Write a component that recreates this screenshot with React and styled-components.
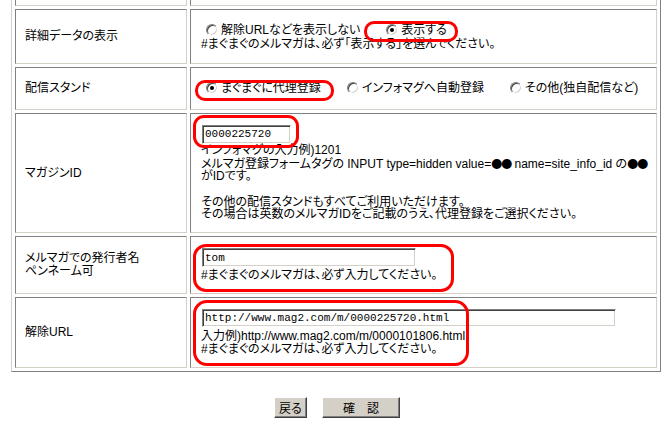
import React from "react";
import styled, { createGlobalStyle, css } from "styled-components";

const GlobalStyle = createGlobalStyle`
  html, body { margin: 0; padding: 0; background: #fff; }
  body {
    font-family: "Liberation Sans", "Noto Sans CJK JP", sans-serif;
    font-size: 12px;
    color: #000;
    font-feature-settings: "palt";
    overflow: hidden;
  }
`;

const Page = styled.div`
  width: 672px;
  height: 428px;
  overflow: hidden;
`;

const FormTable = styled.div`
  display: grid;
  grid-template-columns: 172px 467px;
  grid-template-rows: 20px 55px 43px 120px 58px 71px;
  gap: 3px;
  padding: 3px;
  width: 650px;
  box-sizing: border-box;
  margin: -18px 0 0 11px;
  border: 1px solid;
  border-color: #d4d0c8 #808080 #808080 #d4d0c8;
`;

const Cell = styled.div`
  box-sizing: border-box;
  border: 1px solid;
  border-color: #808080 #d4d0c8 #d4d0c8 #808080;
  display: flex;
  flex-direction: column;
  justify-content: center;
  line-height: 12.7px;
  white-space: nowrap;
`;

const LabelCell = styled(Cell)`
  padding: 0 9px;
`;

const ValueCell = styled(Cell)`
  padding: 0 10px;
  position: relative;
  align-items: flex-start;
`;

const Options = styled.div`
  display: flex;
  align-items: center;
  gap: 21px;
  height: ${(p) => p.$h || 14}px;
`;

const Option = styled.label`
  display: flex;
  align-items: center;
`;

const Radio = styled.span`
  width: 12px;
  height: 12px;
  box-sizing: border-box;
  border-radius: 50%;
  border: 1px solid;
  border-color: #808080 #fff #fff #808080;
  box-shadow: inset 1px 1px 0 #404040, inset -1px -1px 0 #d4d0c8;
  background: #fff;
  margin: 0 3px 0 5px;
  position: relative;
  flex: none;
  ${(p) =>
    p.$checked &&
    css`
      &::after {
        content: "";
        position: absolute;
        left: 3px;
        top: 3px;
        width: 4px;
        height: 4px;
        border-radius: 50%;
        background: #000;
      }
    `}
`;

const Line = styled.div`
  min-height: 12.7px;
`;

const Dots = styled.span`
  font-family: "Noto Sans CJK JP", sans-serif;
  font-size: 11px;
  letter-spacing: -1px;
`;

const TextInput = styled.input`
  box-sizing: border-box;
  width: ${(p) => p.$w}px;
  height: ${(p) => p.$h || 19}px;
  border: 1px solid;
  border-color: #808080 #fff #fff #808080;
  box-shadow: inset 1px 1px 0 #404040, inset -1px -1px 0 #d4d0c8;
  font-family: "Liberation Mono", "DejaVu Sans Mono", monospace;
  font-size: 11px;
  padding: 0 2px;
  margin: 0 0 ${(p) => p.$mb ?? 2}px 1px;
  background: #fff;
  color: #000;
  outline: none;
`;

const Highlight = styled.span`
  position: absolute;
  left: ${(p) => p.$x}px;
  top: ${(p) => p.$y}px;
  width: ${(p) => p.$w}px;
  height: ${(p) => p.$h}px;
  box-sizing: border-box;
  border: 3px solid #f00;
  border-radius: ${(p) => p.$r || 10}px;
  pointer-events: none;
`;

const ButtonBar = styled.div`
  display: flex;
  justify-content: center;
  gap: 15px;
  margin-top: 25px;
  padding-left: 2px;
`;

const Button = styled.button`
  box-sizing: border-box;
  width: ${(p) => p.$w}px;
  height: 21px;
  padding: 0;
  background: #d4d0c8;
  border: 1px solid;
  border-color: #fff #404040 #404040 #fff;
  box-shadow: inset -1px -1px 0 #808080;
  font-family: "Noto Sans CJK JP", sans-serif;
  font-feature-settings: "palt";
  font-size: 12px;
  line-height: 19px;
  color: #000;
`;

export default function App() {
  return (
    <Page>
      <GlobalStyle />
      <FormTable>
        <LabelCell />
        <ValueCell />

        <LabelCell>詳細データの表示</LabelCell>
        <ValueCell>
          <Options $h={15}>
            <Option>
              <Radio />
              解除URLなどを表示しない
            </Option>
            <Option>
              <Radio $checked />
              表示する
            </Option>
          </Options>
          <Line>#まぐまぐのメルマガは、必ず「表示する」を選んでください。</Line>
          <Highlight $x={173} $y={11} $w={94} $h={21} />
        </ValueCell>

        <LabelCell>配信スタンド</LabelCell>
        <ValueCell>
          <Options>
            <Option>
              <Radio $checked />
              まぐまぐに代理登録
            </Option>
            <Option>
              <Radio />
              インフォマグへ自動登録
            </Option>
            <Option>
              <Radio />
              その他(独自配信など)
            </Option>
          </Options>
          <Highlight $x={4} $y={12} $w={139} $h={21} />
        </ValueCell>

        <LabelCell>マガジンID</LabelCell>
        <ValueCell>
          <TextInput $w={89} $mb={0} defaultValue="0000225720" />
          <Line>インフォマグの入力例)1201</Line>
          <Line>
            メルマガ登録フォームタグの INPUT type=hidden value=<Dots>●●</Dots> name=site_info_id の<Dots>●●</Dots>
          </Line>
          <Line>がIDです。</Line>
          <Line />
          <Line>その他の配信スタンドもすべてご利用いただけます。</Line>
          <Line>その場合は英数のメルマガIDをご記載のうえ、代理登録をご選択ください。</Line>
          <Highlight $x={2} $y={1} $w={106} $h={33} $r={11} />
        </ValueCell>

        <LabelCell>
          <Line>メルマガでの発行者名</Line>
          <Line>ペンネーム可</Line>
        </LabelCell>
        <ValueCell>
          <TextInput $w={214} defaultValue="tom" />
          <Line>#まぐまぐのメルマガは、必ず入力してください。</Line>
          <Highlight $x={2} $y={7} $w={261} $h={48} $r={13} />
        </ValueCell>

        <LabelCell>解除URL</LabelCell>
        <ValueCell>
          <TextInput $w={414} $h={18} $mb={3} defaultValue="http://www.mag2.com/m/0000225720.html" />
          <Line>入力例)http://www.mag2.com/m/0000101806.html</Line>
          <Line>#まぐまぐのメルマガは、必ず入力してください。</Line>
          <Highlight $x={2} $y={2} $w={276} $h={66} $r={14} />
        </ValueCell>
      </FormTable>
      <ButtonBar>
        <Button type="button" $w={33}>戻る</Button>
        <Button type="button" $w={78}>確　認</Button>
      </ButtonBar>
    </Page>
  );
}
